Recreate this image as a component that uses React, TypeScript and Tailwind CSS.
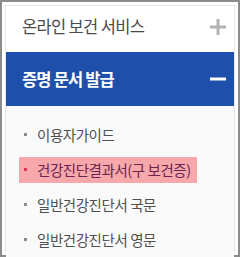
const items = [
  { label: '이용자가이드', active: false },
  { label: '건강진단결과서(구 보건증)', active: true },
  { label: '일반건강진단서 국문', active: false },
  { label: '일반건강진단서 영문', active: false },
];

export default function App() {
  return (
    <div
      className="w-[240px] h-[257px] border-2 border-[#8c8c8c] bg-white p-[3px]"
      style={{ fontFamily: '"Noto Sans CJK KR", "Noto Sans", sans-serif' }}
    >
      <div className="h-full flex flex-col border border-[#e6e6e6]">
        {/* Collapsed section */}
        <div className="h-[46px] shrink-0 flex items-center justify-between pl-4 pr-2 pb-[5px] bg-white">
          <span className="text-[16.5px] tracking-[-0.04em] text-[#4a4a4a]">온라인 보건 서비스</span>
          <svg className="w-4 h-4" viewBox="0 0 16 16">
            <path d="M8 0v16M0 8h16" stroke="#b3b3b3" strokeWidth={3} />
          </svg>
        </div>

        {/* Expanded section */}
        <div className="h-[54px] shrink-0 flex items-center justify-between pl-4 pr-2 bg-[#1e50ab]">
          <span className="text-[16.5px] font-bold tracking-[-0.05em] text-white">증명 문서 발급</span>
          <svg className="w-4 h-4" viewBox="0 0 16 16">
            <path d="M0 8h16" stroke="#fff" strokeWidth={3} />
          </svg>
        </div>

        {/* Sub menu */}
        <ul className="flex-1 bg-[#fafafa] pt-[11px] pl-[13px]">
          {items.map((item) => (
            <li key={item.label} className="h-[35px] flex items-center">
              <span
                className={`inline-flex items-center h-[26px] pl-[5px] pr-[6px] ${
                  item.active ? 'bg-[#f7a8ab] text-[#6a2450]' : 'text-[#505050]'
                }`}
              >
                <span
                  className={`w-[3px] h-[3px] mr-[10px] ${item.active ? 'bg-[#d9364e]' : 'bg-[#8a8a8a]'}`}
                />
                <span className="text-[14.5px] tracking-[-0.03em]">{item.label}</span>
              </span>
            </li>
          ))}
        </ul>
      </div>
    </div>
  );
}
